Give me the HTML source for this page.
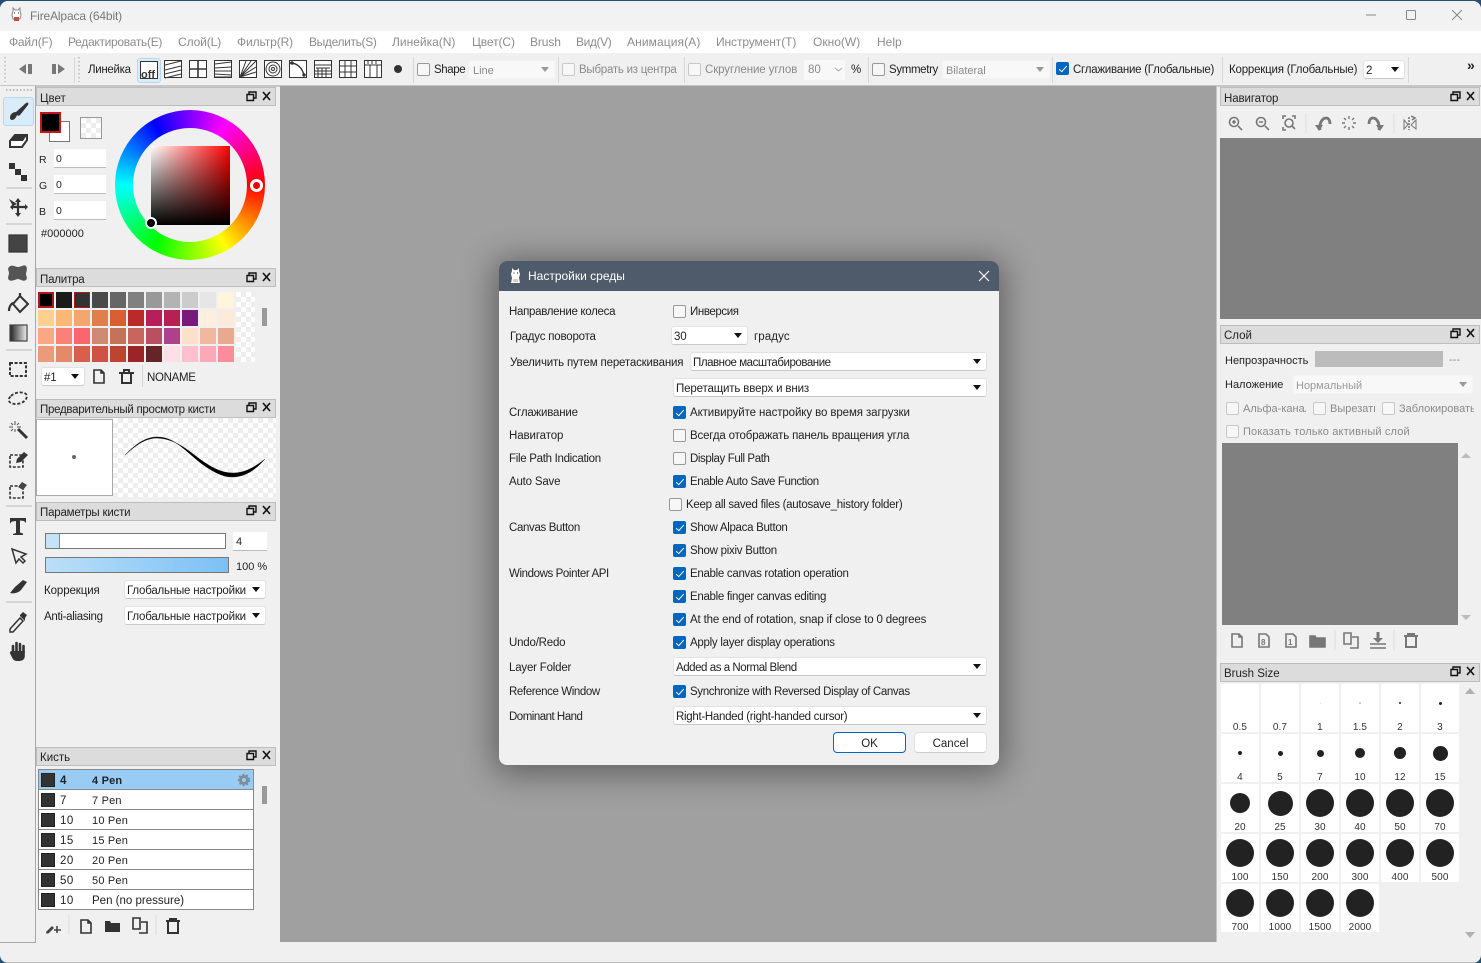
<!DOCTYPE html>
<html><head><meta charset="utf-8"><title>FireAlpaca</title>
<style>
html,body{margin:0;padding:0;width:1481px;height:963px;overflow:hidden;background:#24506e}
#w{position:absolute;left:0;top:1px;width:1481px;height:962px;background:#f0f0f0;border-radius:8px 8px 8px 8px;overflow:hidden;font:12px/16px "Liberation Sans",sans-serif;color:#222}
#w div,#w span{position:absolute}
.t{white-space:nowrap;height:16px;transform:translateY(1px)}
.n{transform:none}
.g{color:#8a8a8a}
.m{color:#8c8c8c;top:33px;font-size:12px;white-space:nowrap}
.h{background:#dcdcdc;border:1px solid #bdbdbd;height:17px;box-sizing:content-box}
.c{width:11px;height:11px;border:1px solid #999;border-radius:2px;background:#f7f7f7}
.c.x{border-color:#c8c8c8}
.c.on{background:#0067c0;border-color:#0067c0}
.c.on::after{content:"";position:absolute;left:3.5px;top:0.5px;width:3px;height:7px;border:solid #fff;border-width:0 1.5px 1.5px 0;transform:rotate(42deg)}
.d{background:#fff;border:1px solid #e2e2e2;border-bottom-color:#c8c8c8;border-radius:3px;box-sizing:border-box;height:19px;line-height:20px;padding-left:2px;white-space:nowrap;font-size:11.5px;letter-spacing:-.2px}
.d::after{content:"";position:absolute;right:5px;top:6px;border:4px solid transparent;border-top:5px solid #111;border-bottom:0}
.d.q{background:#f8f8f8;border-color:#f4f4f4;color:#8a8a8a;font-size:11px;letter-spacing:0}
.d.q::after{border-top-color:#999}
.s{width:1px;background:#d8d8d8;top:56px;height:26px}
.k{background-color:#fff;background-image:conic-gradient(#eee 25%,#fff 0 50%,#eee 0 75%,#fff 0);background-size:10px 10px}
.p{width:16px;height:16px}
.r{left:39px;width:214px;height:19px;background:#fff;border-bottom:1px solid #888;font-size:11.5px;line-height:22px}
.r i{position:absolute;left:2px;top:3px;width:14px;height:14px;background:#333;border:1px solid #222;box-sizing:border-box}
.r b,.r u{position:absolute;font-weight:normal;text-decoration:none;white-space:nowrap}
.r b{left:21px;letter-spacing:.5px}.r u{left:53px;letter-spacing:.2px;font-size:11px}
.b{width:38px;height:48px;background:#fff}
.b i{position:absolute;background:#222;border-radius:50%}
.b span{left:0;width:38px;text-align:center;top:37px;font-size:10px;line-height:14px;color:#333;letter-spacing:.1px}
#dlg{left:499px;top:260px;width:500px;height:504px;background:#f0f0f0;border-radius:8px;box-shadow:0 4px 32px 6px rgba(0,0,0,.38);overflow:hidden}
#dlg .t{font-size:11.5px;letter-spacing:-.2px}
#dlg .t.l3{letter-spacing:-.3px}
#dlg .t.l4{letter-spacing:-.4px}
#dlg .t.l1{letter-spacing:-.1px}
</style></head><body>
<div id="w">
<!-- title bar -->
<div style="left:0;top:0;width:1481px;height:30px;background:#f2f2f2"></div>
<div class="t" style="left:30px;top:6px;color:#777;font-size:12px;letter-spacing:-.15px">FireAlpaca (64bit)</div>
<!-- menu -->
<div style="left:0;top:30px;width:1481px;height:22px;background:#fff"></div>
<span class="m" style="left:9px;letter-spacing:-.2px">Файл(F)</span><span class="m" style="left:68px;letter-spacing:-.3px">Редактировать(E)</span><span class="m" style="left:178px;letter-spacing:-.1px">Слой(L)</span><span class="m" style="left:237px;letter-spacing:-.1px">Фильтр(R)</span><span class="m" style="left:309px;letter-spacing:-.35px">Выделить(S)</span><span class="m" style="left:392px">Линейка(N)</span><span class="m" style="left:472px;letter-spacing:-.1px">Цвет(C)</span><span class="m" style="left:530px;letter-spacing:-.1px">Brush</span><span class="m" style="left:576px;letter-spacing:-.4px">Вид(V)</span><span class="m" style="left:627px;letter-spacing:.1px">Анимация(A)</span><span class="m" style="left:716px;letter-spacing:-.1px">Инструмент(T)</span><span class="m" style="left:813px">Окно(W)</span><span class="m" style="left:877px">Help</span>
<!-- toolbar -->
<div style="left:0;top:52px;width:1481px;height:32px;background:#f0f0f0;border-bottom:2px solid #c6c6c6"></div>
<div style="left:137px;top:57px;width:22px;height:23px;background:#d9ecfb;border:1px solid #b5d8f3;border-radius:3px"></div>
<div class="t" style="left:88px;top:60px;font-size:11.5px;letter-spacing:-.3px">Линейка</div>
<div class="s" style="left:74px"></div><div class="s" style="left:413px"></div><div class="s" style="left:558px"></div><div class="s" style="left:684px"></div><div class="s" style="left:868px"></div><div class="s" style="left:1052px"></div><div class="s" style="left:1222px"></div><div class="s" style="left:1408px"></div>
<div class="c" style="left:417px;top:62px"></div><div class="t" style="left:434px;top:60px;font-size:11.5px;letter-spacing:-.4px">Shape</div>
<div class="d q" style="left:468px;top:59px;width:87px;padding-left:4px">Line</div>
<div class="c x" style="left:562px;top:62px"></div><div class="t g" style="left:579px;top:60px;font-size:11.5px;letter-spacing:-.24px">Выбрать из центра</div>
<div class="c x" style="left:688px;top:62px"></div><div class="t g" style="left:705px;top:60px;font-size:11.5px;letter-spacing:-.1px">Скругление углов</div>
<div class="t g n" style="left:804px;top:59px;width:41px;height:20px;background:#f8f8f8;line-height:20px;padding-left:4px;box-sizing:border-box;font-size:11.5px">80</div>
<div class="t" style="left:851px;top:60px;font-size:11.5px">%</div>
<div class="c" style="left:872px;top:62px"></div><div class="t" style="left:889px;top:60px;font-size:11.5px;letter-spacing:-.35px">Symmetry</div>
<div class="d q" style="left:942px;top:59px;width:108px;padding-left:3px">Bilateral</div>
<div class="c on" style="left:1056px;top:61px"></div><div class="t" style="left:1073px;top:60px;font-size:11.5px;letter-spacing:-.25px">Сглаживание (Глобальные)</div>
<div class="t" style="left:1229px;top:60px;font-size:11.5px;letter-spacing:-.2px">Коррекция (Глобальные)</div>
<div class="d" style="left:1363px;top:59px;width:42px">2</div>
<div class="t n" style="left:1467px;top:56px;font-weight:bold;font-size:14px">»</div>

<!-- left toolbar -->
<div style="left:0;top:85px;width:35px;height:856px;border-right:1px solid #a8a8a8;border-bottom:1px solid #a8a8a8;background:#f0f0f0"></div>
<div style="left:3px;top:96px;width:29px;height:27px;background:#d9ecfb;border:1px solid #b5d8f3;border-radius:3px"></div>

<!-- canvas -->
<div style="left:280px;top:85px;width:936px;height:856px;background:#a0a0a0"></div>
<!-- left panels -->
<div class="h" style="left:36px;top:86px;width:238px"></div>
<div class="t" style="left:40px;top:89px;font-size:11.5px">Цвет</div>
<div class="h" style="left:36px;top:267px;width:238px"></div>
<div class="t" style="left:40px;top:270px;font-size:11.5px;letter-spacing:-.2px">Палитра</div>
<div class="h" style="left:36px;top:398px;width:238px"></div>
<div class="t" style="left:40px;top:400px;font-size:11.5px;letter-spacing:-.27px">Предварительный просмотр кисти</div>
<div class="h" style="left:36px;top:501px;width:238px"></div>
<div class="t" style="left:40px;top:503px;font-size:11.5px;letter-spacing:-.2px">Параметры кисти</div>
<div class="h" style="left:36px;top:746px;width:238px"></div>
<div class="t" style="left:40px;top:748px;font-size:11.5px">Кисть</div>

<!-- color panel -->
<div style="left:49px;top:120px;width:19px;height:19px;background:#fff;border:1px solid #777"></div>
<div style="left:40px;top:111px;width:17px;height:17px;background:#000;border:2px solid #c81414"></div>
<div class="k" style="left:80px;top:116px;width:20px;height:20px;border:1px solid #999"></div>
<div class="t" style="left:39px;top:150px;font-size:10.5px">R</div>
<div class="t" style="left:39px;top:176px;font-size:10.5px">G</div>
<div class="t" style="left:39px;top:202px;font-size:10.5px">B</div>
<div class="t n" style="left:54px;top:148px;width:50px;height:18px;background:#fff;border-bottom:1px solid #bbb;padding-left:2px;line-height:21px;font-size:10.5px">0</div>
<div class="t n" style="left:54px;top:174px;width:50px;height:18px;background:#fff;border-bottom:1px solid #bbb;padding-left:2px;line-height:21px;font-size:10.5px">0</div>
<div class="t n" style="left:54px;top:200px;width:50px;height:18px;background:#fff;border-bottom:1px solid #bbb;padding-left:2px;line-height:21px;font-size:10.5px">0</div>
<div class="t" style="left:41px;top:224px;font-size:11px">#000000</div>
<div style="left:115px;top:109px;width:150px;height:150px;border-radius:50%;background:conic-gradient(#8000ff,#f0f 30deg,#f00 90deg,#ff0 150deg,#0f0 210deg,#0ff 270deg,#00f 330deg,#8000ff 360deg)"></div>
<div style="left:133px;top:127px;width:114px;height:114px;border-radius:50%;background:#f0f0f0"></div>
<div style="left:151px;top:145px;width:79px;height:79px;background:linear-gradient(to top,#000,rgba(0,0,0,0)),linear-gradient(to right,#fff,#f00)"></div>
<div style="left:250px;top:178px;width:7px;height:7px;background:#e80000;border:3px solid #fff;border-radius:50%"></div>
<div style="left:145px;top:216px;width:8px;height:8px;background:#000;border:2.5px solid #fff;border-radius:50%"></div>

<!-- palette -->
<div class="p" style="left:38px;top:291px;background:#000;outline:2px solid #b01818;outline-offset:-2px"></div><div class="p" style="left:56px;top:291px;background:#1a1a1a"></div><div class="p" style="left:74px;top:291px;background:#333;outline:1px solid #b01818;outline-offset:-1px"></div><div class="p" style="left:92px;top:291px;background:#4a4a4a"></div><div class="p" style="left:110px;top:291px;background:#666"></div><div class="p" style="left:128px;top:291px;background:#808080"></div><div class="p" style="left:146px;top:291px;background:#999"></div><div class="p" style="left:164px;top:291px;background:#b3b3b3"></div><div class="p" style="left:182px;top:291px;background:#ccc"></div><div class="p" style="left:200px;top:291px;background:#e6e6e6"></div><div class="p" style="left:218px;top:291px;background:#fff5dc"></div>
<div class="p" style="left:38px;top:309px;background:#fdd08f"></div><div class="p" style="left:56px;top:309px;background:#fbb874"></div><div class="p" style="left:74px;top:309px;background:#f3a66d"></div><div class="p" style="left:92px;top:309px;background:#e07f4c"></div><div class="p" style="left:110px;top:309px;background:#d95f30"></div><div class="p" style="left:128px;top:309px;background:#b92a28"></div><div class="p" style="left:146px;top:309px;background:#b81f5a"></div><div class="p" style="left:164px;top:309px;background:#b81f55"></div><div class="p" style="left:182px;top:309px;background:#7a1a7a"></div><div class="p" style="left:200px;top:309px;background:#fdeedd"></div><div class="p" style="left:218px;top:309px;background:#fdeadb"></div>
<div class="p" style="left:38px;top:327px;background:#fba684"></div><div class="p" style="left:56px;top:327px;background:#fb8078"></div><div class="p" style="left:74px;top:327px;background:#fb6570"></div><div class="p" style="left:92px;top:327px;background:#cf8a74"></div><div class="p" style="left:110px;top:327px;background:#c4735a"></div><div class="p" style="left:128px;top:327px;background:#c8655f"></div><div class="p" style="left:146px;top:327px;background:#b8505f"></div><div class="p" style="left:164px;top:327px;background:#b0408a"></div><div class="p" style="left:182px;top:327px;background:#fde0cc"></div><div class="p" style="left:200px;top:327px;background:#f0b8a0"></div><div class="p" style="left:218px;top:327px;background:#eaa88e"></div>
<div class="p" style="left:38px;top:345px;background:#ec9b7a"></div><div class="p" style="left:56px;top:345px;background:#e58a68"></div><div class="p" style="left:74px;top:345px;background:#d6604a"></div><div class="p" style="left:92px;top:345px;background:#cf5245"></div><div class="p" style="left:110px;top:345px;background:#bd452f"></div><div class="p" style="left:128px;top:345px;background:#9b2428"></div><div class="p" style="left:146px;top:345px;background:#662328"></div><div class="p" style="left:164px;top:345px;background:#fddfe8"></div><div class="p" style="left:182px;top:345px;background:#fdc0cc"></div><div class="p" style="left:200px;top:345px;background:#fba8b8"></div><div class="p" style="left:218px;top:345px;background:#fb8c9c"></div>
<div class="k" style="left:236px;top:291px;width:19px;height:70px"></div>
<div style="left:262px;top:307px;width:5px;height:18px;background:#999"></div>
<div class="d" style="left:41px;top:366px;width:44px">#1</div>
<div style="left:142px;top:364px;width:1px;height:22px;background:#d4d4d4"></div>
<div class="t" style="left:147px;top:368px;font-size:11.5px;letter-spacing:-.3px">NONAME</div>

<!-- brush preview -->
<div class="k" style="left:113px;top:417px;width:163px;height:79px"></div>
<div style="left:36px;top:418px;width:75px;height:75px;background:#fff;border:1px solid #aaa"></div>
<div style="left:72px;top:454px;width:4px;height:4px;background:#666;border-radius:50%"></div>

<!-- brush params -->
<div style="left:45px;top:532px;width:179px;height:14px;background:#fff;border:1px solid #777"></div>
<div style="left:46px;top:533px;width:13px;height:14px;background:#c5e3f8;border-right:1px solid #5d8fb8"></div>
<div class="t n" style="left:233px;top:531px;width:31px;height:18px;background:#fff;border-bottom:1px solid #bbb;padding-left:3px;line-height:21px;font-size:11px">4</div>
<div style="left:45px;top:556px;width:182px;height:14px;background:linear-gradient(to right,#bbdff7,#7cc0f5);border:1px solid #777"></div>
<div class="t" style="left:236px;top:557px;font-size:11px">100 %</div>
<div class="t" style="left:44px;top:581px;font-size:11.5px;letter-spacing:-.1px">Коррекция</div>
<div class="d" style="left:124px;top:579px;width:142px">Глобальные настройки</div>
<div class="t" style="left:44px;top:607px;font-size:11.5px;letter-spacing:-.3px">Anti-aliasing</div>
<div class="d" style="left:124px;top:605px;width:142px">Глобальные настройки</div>

<!-- brush list -->
<div style="left:38px;top:768px;width:216px;height:141px;border:1px solid #888;box-sizing:border-box;background:#888"></div>
<div class="r" style="top:769px;background:#99ccf5;font-weight:bold"><i></i><b style="font-weight:bold">4</b><u style="font-weight:bold">4 Pen</u></div>
<div class="r" style="top:789px"><i></i><b>7</b><u>7 Pen</u></div>
<div class="r" style="top:809px"><i></i><b>10</b><u>10 Pen</u></div>
<div class="r" style="top:829px"><i></i><b>15</b><u>15 Pen</u></div>
<div class="r" style="top:849px"><i></i><b>20</b><u>20 Pen</u></div>
<div class="r" style="top:869px"><i></i><b>50</b><u>50 Pen</u></div>
<div class="r" style="top:889px"><i></i><b>10</b><u style="letter-spacing:0;font-size:11.5px">Pen (no pressure)</u></div>
<div style="left:262px;top:785px;width:5px;height:18px;background:#999"></div>

<!-- right panels -->
<div style="left:1216px;top:85px;width:1px;height:856px;background:#c4c4c4"></div>
<div class="h" style="left:1220px;top:86px;width:258px"></div>
<div class="t" style="left:1224px;top:89px;font-size:11.5px;letter-spacing:-.1px">Навигатор</div>
<div style="left:1220px;top:137px;width:261px;height:181px;background:#808080"></div>
<div class="h" style="left:1220px;top:324px;width:258px"></div>
<div class="t" style="left:1224px;top:326px;font-size:11.5px">Слой</div>
<div class="t" style="left:1225px;top:351px;font-size:11px">Непрозрачность</div>
<div style="left:1315px;top:350px;width:128px;height:16px;background:#bcbcbc"></div>
<div class="t g" style="left:1449px;top:350px;font-size:11px">---</div>
<div class="t" style="left:1225px;top:375px;font-size:11px">Наложение</div>
<div class="d q" style="left:1293px;top:374px;width:180px;color:#999">Нормальный</div>
<div class="c x" style="left:1226px;top:401px"></div><div class="t g" style="left:1243px;top:399px;font-size:11px;width:63px;overflow:hidden">Альфа-канал</div>
<div class="c x" style="left:1313px;top:401px"></div><div class="t g" style="left:1330px;top:399px;font-size:11px;width:45px;overflow:hidden">Вырезать</div>
<div class="c x" style="left:1382px;top:401px"></div><div class="t g" style="left:1399px;top:399px;font-size:11px;width:75px;overflow:hidden">Заблокировать</div>
<div class="c x" style="left:1226px;top:424px"></div><div class="t g" style="left:1243px;top:422px;font-size:11px;letter-spacing:.15px">Показать только активный слой</div>
<div style="left:1222px;top:442px;width:236px;height:182px;background:#808080"></div>
<div class="h" style="left:1220px;top:662px;width:258px"></div>
<div class="t" style="left:1224px;top:664px;font-size:11.5px">Brush Size</div>

<!-- brush size -->
<div class="b" style="left:1221px;top:683px"><span>0.5</span></div>
<div class="b" style="left:1261px;top:683px"><span>0.7</span></div>
<div class="b" style="left:1301px;top:683px"><i style="left:18.5px;top:18.5px;width:1px;height:1px;opacity:.2"></i><span>1</span></div>
<div class="b" style="left:1341px;top:683px"><i style="left:18px;top:18px;width:2px;height:2px;opacity:.3"></i><span>1.5</span></div>
<div class="b" style="left:1381px;top:683px"><i style="left:18px;top:18px;width:2px;height:2px"></i><span>2</span></div>
<div class="b" style="left:1421px;top:683px"><i style="left:17.5px;top:17.5px;width:3px;height:3px"></i><span>3</span></div>
<div class="b" style="left:1221px;top:733px"><i style="left:17px;top:17px;width:4px;height:4px"></i><span>4</span></div>
<div class="b" style="left:1261px;top:733px"><i style="left:16.5px;top:16.5px;width:5px;height:5px"></i><span>5</span></div>
<div class="b" style="left:1301px;top:733px"><i style="left:15.5px;top:15.5px;width:7px;height:7px"></i><span>7</span></div>
<div class="b" style="left:1341px;top:733px"><i style="left:14px;top:14px;width:10px;height:10px"></i><span>10</span></div>
<div class="b" style="left:1381px;top:733px"><i style="left:13px;top:13px;width:12px;height:12px"></i><span>12</span></div>
<div class="b" style="left:1421px;top:733px"><i style="left:11.5px;top:11.5px;width:15px;height:15px"></i><span>15</span></div>
<div class="b" style="left:1221px;top:783px"><i style="left:9px;top:9px;width:20px;height:20px"></i><span>20</span></div>
<div class="b" style="left:1261px;top:783px"><i style="left:6.5px;top:6.5px;width:25px;height:25px"></i><span>25</span></div>
<div class="b" style="left:1301px;top:783px"><i style="left:5px;top:5px;width:28px;height:28px"></i><span>30</span></div>
<div class="b" style="left:1341px;top:783px"><i style="left:5px;top:5px;width:28px;height:28px"></i><span>40</span></div>
<div class="b" style="left:1381px;top:783px"><i style="left:5px;top:5px;width:28px;height:28px"></i><span>50</span></div>
<div class="b" style="left:1421px;top:783px"><i style="left:5px;top:5px;width:28px;height:28px"></i><span>70</span></div>
<div class="b" style="left:1221px;top:833px"><i style="left:5px;top:5px;width:28px;height:28px"></i><span>100</span></div>
<div class="b" style="left:1261px;top:833px"><i style="left:5px;top:5px;width:28px;height:28px"></i><span>150</span></div>
<div class="b" style="left:1301px;top:833px"><i style="left:5px;top:5px;width:28px;height:28px"></i><span>200</span></div>
<div class="b" style="left:1341px;top:833px"><i style="left:5px;top:5px;width:28px;height:28px"></i><span>300</span></div>
<div class="b" style="left:1381px;top:833px"><i style="left:5px;top:5px;width:28px;height:28px"></i><span>400</span></div>
<div class="b" style="left:1421px;top:833px"><i style="left:5px;top:5px;width:28px;height:28px"></i><span>500</span></div>
<div class="b" style="left:1221px;top:883px"><i style="left:5px;top:5px;width:28px;height:28px"></i><span>700</span></div>
<div class="b" style="left:1261px;top:883px"><i style="left:5px;top:5px;width:28px;height:28px"></i><span>1000</span></div>
<div class="b" style="left:1301px;top:883px"><i style="left:5px;top:5px;width:28px;height:28px"></i><span>1500</span></div>
<div class="b" style="left:1341px;top:883px"><i style="left:5px;top:5px;width:28px;height:28px"></i><span>2000</span></div>

<!-- icons overlay -->
<svg width="1481" height="963" viewBox="0 0 1481 963" style="position:absolute;left:0;top:-1px" fill="none">
<defs>
<g id="dk"><path d="M3 3.500V1h7v6H7.500M1 3.500h6.500v6H1z" stroke="#111" stroke-width="1.400"/><path d="M17 1l7 8M24 1l-7 8" stroke="#111" stroke-width="1.600"/></g>
<linearGradient id="gd"><stop offset="0" stop-color="#222"/><stop offset="1" stop-color="#eee"/></linearGradient>
</defs>
<!-- window controls -->
<path d="M1366 15h10" stroke="#888"/><rect x="1406.500" y="10.500" width="9" height="9" rx="1" stroke="#888"/><path d="M1452 10l10 10M1462 10l-10 10" stroke="#888"/>
<!-- app icon -->
<path d="M13 11l0-3 2 2h3l2-2 0 3 1 4-1 4h-7l-1-4z" fill="#fff" stroke="#888"/><path d="M14 13h1M18 13h1" stroke="#444" stroke-width="1.200"/><rect x="14" y="17" width="5" height="4" fill="#c05040"/>
<!-- dock controls -->
<use href="#dk" x="246" y="91"/><use href="#dk" x="246" y="272"/><use href="#dk" x="246" y="402"/><use href="#dk" x="246" y="505"/><use href="#dk" x="246" y="750"/>
<use href="#dk" x="1450" y="91"/><use href="#dk" x="1450" y="328"/><use href="#dk" x="1450" y="666"/>
<!-- grips -->
<path d="M5 57v25M79 57v25" stroke="#bbb" stroke-dasharray="1.500 2.500" stroke-width="1.500"/>
<path d="M6 90h28" stroke="#bbb" stroke-width="2" stroke-dasharray="1.500 2"/>
<path d="M26 64l-7 5 7 5zM28 64h4v10h-4zM52 64h4v10h-4zM58 64l7 5-7 5z" fill="#777"/>
<!-- ruler icons -->
<g stroke="#333" stroke-width="1">
<rect x="140.500" y="61.500" width="17" height="17" fill="#fff"/>
<rect x="164.500" y="60.500" width="17" height="17" fill="#fff"/><path d="M165 65l16-4M165 70l16-4M165 74l16-4M165 78l16-4"/>
<rect x="189.500" y="60.500" width="17" height="17" fill="#fff"/><path d="M198 60v18M189 69h18" stroke-width="1.600"/>
<rect x="214.500" y="60.500" width="17" height="17" fill="#fff"/><path d="M215 64l16-2M215 68l16-1M215 71h16M215 74l16 1M215 77l16 0"/>
<rect x="239.500" y="60.500" width="17" height="17" fill="#fff"/><path d="M240 77l6-16M240 77l11-16M240 77l16-16M240 77l16-10M240 77l16-5"/>
<rect x="264.500" y="60.500" width="17" height="17" fill="#fff"/><circle cx="273" cy="69" r="7"/><circle cx="273" cy="69" r="4"/><circle cx="273" cy="69" r="1.500"/>
<rect x="289.500" y="60.500" width="17" height="17" fill="#fff"/><path d="M290 63c8 0 13 6 14 13" stroke-width="1.400"/><circle cx="292" cy="63" r="1.200" fill="#333"/><circle cx="304" cy="75" r="1.200" fill="#333"/>
<rect x="314.500" y="60.500" width="17" height="17" fill="#fff"/><path d="M314 65h18M316 68h14M314 71h18M314 74h18M318 68v10M322 68v10M326 68v10"/>
<rect x="339.500" y="60.500" width="17" height="17" fill="#fff"/><path d="M345 61v17M351 61v17M340 66h17M340 72h17"/>
<rect x="364.500" y="60.500" width="17" height="17" fill="#fff"/><path d="M365 65h17M370 65v13M377 65v13"/><path d="M368 61v3M372 61v3M376 61v3"/>
</g>
<text x="141" y="78" font-family="Liberation Sans" font-weight="bold" font-size="11" fill="#333">off</text>
<circle cx="398" cy="69" r="4" fill="#333"/>
<path d="M835 68l3.500 3 3.500-3" stroke="#aaa"/>
<!-- left tools -->
<path d="M10 118c0-4 3-6 6-6l10-9c2-1 3 0 2 2l-8 10c-1 1-2 1-3 0-1 3-3 5-5 5-1 0-2-1-2-2z" fill="#333"/>
<path d="M10 141l5-6h12v5l-5 7H10z" fill="#fff" stroke="#333" stroke-width="2"/><path d="M15 135h12l-4 6H10z" fill="#333"/>
<path d="M9 163h6v6H9zM15 169h6v6h-6zM21 175h6v6h-6z" fill="#333"/>
<path d="M9 199l8 5-4 2z" fill="#333"/><path d="M18 200v15M11 207h15" stroke="#333" stroke-width="2.200"/><path d="M18 198l-3 4h6zM18 217l-3-4h6zM10 207l3-3v6zM28 207l-3-3v6z" fill="#333"/>
<rect x="9" y="235" width="18" height="17" fill="#444" stroke="#333" stroke-width="1.200"/>
<path d="M9 267c3-3 6 0 9 0s6-3 8-1c2 3 0 6 0 8s2 4 0 6c-3 2-6-1-8-1s-6 3-9 1c-2-2 0-5 0-7s-2-4 0-6z" fill="#555"/>
<path d="M20 296l8 8-8 8-7-8z" stroke="#333" stroke-width="2" fill="#f0f0f0"/><path d="M14 303c-3 0-5 4-5 8M20 296v-3" stroke="#333" stroke-width="2.200"/>
<rect x="10" y="325" width="17" height="16" fill="url(#gd)" stroke="#444" stroke-width="1.200"/>
<g stroke="#bbb"><path d="M6 188h26M6 224h26M6 350h26M6 506h26M6 602h26"/></g>
<rect x="10" y="363" width="16" height="13" stroke="#333" stroke-width="2" stroke-dasharray="3 1.600"/>
<path d="M11 396c5-5 13-4 15-2 2 3 0 7-5 9-5 2-11 1-12-2-1-2 1-4 2-5z" stroke="#333" stroke-width="1.800" stroke-dasharray="3 1.800"/>
<path d="M18 429l9 9" stroke="#333" stroke-width="3"/><path d="M15 421v4M15 432v-3M9 427h4M21 427h-4M11 423l2 2M19 423l-2 2M11 431l2-2" stroke="#555"/>
<rect x="10" y="455" width="13" height="12" stroke="#333" stroke-width="1.600" stroke-dasharray="3 1.600"/><path d="M17 459l7-7 4 3-7 7-5 1z" fill="#333"/>
<rect x="10" y="486" width="13" height="12" stroke="#333" stroke-width="1.600" stroke-dasharray="3 1.600"/><path d="M18 487l4-5 5 3-4 5z" fill="#444"/>
<path d="M10 518h16v5l-2-2-4-.5v12l3 1v1.500H13V534l3-1v-12l-4 .5-2 2z" fill="#333"/>
<path d="M12 549l14 5-5 3 4 4-2 2-4-4-3 4z" fill="#f0f0f0" stroke="#333" stroke-width="1.500"/>
<path d="M10 593l5-6 8-7 4 2-6 8c-3 3-7 4-11 3z" fill="#333"/>
<path d="M10 629l10-11 3 3-10 11-3 0z" stroke="#333" stroke-width="1.500" fill="#f0f0f0"/><path d="M20 615l3-3 4 3-2 3 0 3-5-5z" fill="#333"/>
<path d="M13 652v-6M16.500 651v-8M20 651v-7M23.500 652v-6" stroke="#333" stroke-width="2.600" stroke-linecap="round"/><path d="M11.800 651h13v5c0 3-2 5-6 5h-2c-3 0-4-2-5-4l-2-4c0-1 1-2 2-2z" fill="#333"/>
<!-- palette buttons -->
<path d="M94 370h7l3 3v10H94zM101 370v3h3" stroke="#333" stroke-width="1.600"/>
<path d="M119 373h15M122 373v10h9v-10M124 373v-3h5v3" stroke="#333" stroke-width="2"/>
<!-- brush stroke -->
<path d="M125 455c10-10 20-18 32-18 18 0 28 14 45 27 10 7 20 13 30 13 14 0 24-8 33-18-10 8-20 14-32 14-12 0-22-6-32-13-16-12-26-21-44-22-12 0-22 8-32 17z" fill="#000" stroke="#000" stroke-width=".4"/>
<!-- brush list footer -->
<path d="M46 932l6-6 2 2-5 5c-1 1-3 1-3-1z" fill="#444"/><path d="M57 926v7M54 930h7" stroke="#444" stroke-width="1.600"/>
<path d="M81 920h7l3 3v10H81zM88 920v3h3" stroke="#333" stroke-width="1.600"/>
<path d="M105 921h5l1 2h9v9h-15z" fill="#333"/>
<path d="M133 918h7v11h-7zM141 922h6v11h-8" stroke="#333" stroke-width="1.600"/>
<path d="M166 921h14M168 921v12h10v-12M170 921v-2h6v2" stroke="#333" stroke-width="2"/>
<path d="M69 915v20M156 915v20" stroke="#ddd"/>
<!-- gear -->
<circle cx="244" cy="780" r="3.500" stroke="#7d8d9a" stroke-width="3"/><circle cx="244" cy="780" r="5.500" stroke="#7d8d9a" stroke-width="1.500" stroke-dasharray="2 2"/>
<!-- navigator tools -->
<g stroke="#777" stroke-width="1.600">
<circle cx="1234" cy="122" r="4.500"/><path d="M1238 126l4 4M1232 122h4M1234 120v4"/>
<circle cx="1261" cy="122" r="4.500"/><path d="M1265 126l4 4M1259 122h4"/>
<circle cx="1289" cy="123" r="4"/><path d="M1292 126l3 3M1283 119v-3h3M1292 116h3v3M1283 127v3h3"/>
<path d="M1320 130c-1-8 3-12 6-12 3 0 4 3 4 6" stroke-width="2.800"/><path d="M1315 125l4 6 4-6z" fill="#777" stroke="none"/>
<path d="M1349 116v3M1349 127v3M1342 123h3M1353 123h3M1344 118l2 2M1352 126l2 2M1344 128l2-2M1352 120l2-2" stroke-width="1.400"/>
<path d="M1379 130c1-8-3-12-6-12-3 0-4 3-4 6" stroke-width="2.800"/><path d="M1384 125l-4 6-4-6z" fill="#777" stroke="none"/>
<path d="M1409 117v13" stroke-dasharray="2 1"/><path d="M1404 120v9l4-4.500zM1411 125l5-5v9z" stroke-width="1"/><path d="M1411 116l4 2-3 2" stroke-width="1.500"/>
</g>
<path d="M1306 113v20M1394 113v20" stroke="#ddd"/>
<!-- layer tools -->
<g stroke="#777" stroke-width="1.600">
<path d="M1232 634h7l3 3v10h-10zM1239 634v3h3"/>
<path d="M1259 634h7l3 3v10h-10z"/><text x="1261" y="645" font-size="8" fill="#777" stroke="none" font-family="Liberation Sans" font-weight="bold">8</text>
<path d="M1286 634h7l3 3v10h-10z"/><text x="1288" y="645" font-size="8" fill="#777" stroke="none" font-family="Liberation Sans" font-weight="bold">1</text>
<path d="M1310 636h5l1 2h9v9h-15z" fill="#777"/>
<path d="M1344 633h7v11h-7zM1352 637h6v11h-8"/>
<path d="M1378 632v8" stroke-width="3"/><path d="M1373 638h10l-5 5z" fill="#777" stroke="none"/><path d="M1370 644h16M1370 648h16"/>
<path d="M1404 636h14M1406 636v11h10v-11M1408 636v-2h6v2" stroke-width="2"/>
</g>
<path d="M1335 630v20M1394 630v20" stroke="#ddd"/>
<!-- scroll arrows -->
<path d="M1466 453l-5 5h10zM1466 620l-5-5h10z" fill="#bbb"/>
<path d="M1470 688l-5 6h10zM1470 938l-5-6h10z" fill="#b0b0b0"/>
<path d="M1477 956v.1M1473 960v.1M1477 960v.1" stroke="#aaa" stroke-width="2"/>
</svg>
<div style="left:0;top:961px;width:1481px;height:1px;background:#bbb"></div>

<!-- dialog -->
<div id="dlg">
<div style="left:0;top:0;width:500px;height:30px;background:#4f5b6b"></div>
<svg width="500" height="30" style="position:absolute;left:0;top:0" fill="none"><path d="M13 10l0-3 2 2h3l2-2 0 3 1 3-1 4 1 5h-9l1-5-1-4z" fill="#fff"/><path d="M14.500 12h1M18 12h1" stroke="#445" stroke-width="1.200"/><rect x="14" y="18" width="5" height="3" fill="#d8d0b0"/><path d="M480 10l10 10M490 10l-10 10" stroke="#fff" stroke-width="1.100"/></svg>
<div class="t n" style="left:29px;top:7px;color:#fff;font-size:12px;letter-spacing:0">Настройки среды</div>

<div class="t l3" style="left:10px;top:42px">Направление колеса</div><div class="c" style="left:174px;top:44px"></div><div class="t l4" style="left:191px;top:42px">Инверсия</div>
<div class="t" style="left:11px;top:67px">Градус поворота</div><div class="d" style="left:172px;top:65px;width:77px">30</div><div class="t" style="left:255px;top:67px;letter-spacing:.1px">градус</div>
<div class="t" style="left:11px;top:93px;letter-spacing:-.17px">Увеличить путем перетаскивания</div><div class="d" style="left:191px;top:91px;width:297px;letter-spacing:-.45px">Плавное масштабирование</div>
<div class="d" style="left:174px;top:117px;width:314px;letter-spacing:-.15px">Перетащить вверх и вниз</div>
<div class="t" style="left:10px;top:143px">Сглаживание</div><div class="c on" style="left:174px;top:145px"></div><div class="t l1" style="left:191px;top:143px">Активируйте настройку во время загрузки</div>
<div class="t l1" style="left:10px;top:166px">Навигатор</div><div class="c" style="left:174px;top:168px"></div><div class="t" style="left:191px;top:166px;letter-spacing:-.17px">Всегда отображать панель вращения угла</div>
<div class="t l3" style="left:10px;top:189px">File Path Indication</div><div class="c" style="left:174px;top:191px"></div><div class="t l4" style="left:191px;top:189px">Display Full Path</div>
<div class="t" style="left:10px;top:212px">Auto Save</div><div class="c on" style="left:174px;top:214px"></div><div class="t l4" style="left:191px;top:212px">Enable Auto Save Function</div>
<div class="c" style="left:170px;top:237px"></div><div class="t" style="left:187px;top:235px;letter-spacing:-.27px">Keep all saved files (autosave_history folder)</div>
<div class="t" style="left:10px;top:258px;letter-spacing:-.35px">Canvas Button</div><div class="c on" style="left:174px;top:260px"></div><div class="t l3" style="left:191px;top:258px">Show Alpaca Button</div>
<div class="c on" style="left:174px;top:283px"></div><div class="t" style="left:191px;top:281px;letter-spacing:-.27px">Show pixiv Button</div>
<div class="t l4" style="left:10px;top:304px">Windows Pointer API</div><div class="c on" style="left:174px;top:306px"></div><div class="t l3" style="left:191px;top:304px">Enable canvas rotation operation</div>
<div class="c on" style="left:174px;top:329px"></div><div class="t l3" style="left:191px;top:327px">Enable finger canvas editing</div>
<div class="c on" style="left:174px;top:352px"></div><div class="t" style="left:191px;top:350px;letter-spacing:-.16px">At the end of rotation, snap if close to 0 degrees</div>
<div class="t" style="left:10px;top:373px">Undo/Redo</div><div class="c on" style="left:174px;top:375px"></div><div class="t" style="left:191px;top:373px;letter-spacing:-.27px">Apply layer display operations</div>
<div class="t" style="left:10px;top:398px">Layer Folder</div><div class="d" style="left:174px;top:396px;width:314px;letter-spacing:-.45px">Added as a Normal Blend</div>
<div class="t l4" style="left:10px;top:422px">Reference Window</div><div class="c on" style="left:174px;top:424px"></div><div class="t" style="left:191px;top:422px;letter-spacing:-.36px">Synchronize with Reversed Display of Canvas</div>
<div class="t" style="left:10px;top:447px;letter-spacing:-.5px">Dominant Hand</div><div class="d" style="left:174px;top:445px;width:314px;letter-spacing:-.3px">Right-Handed (right-handed cursor)</div>
<div class="t n" style="left:334px;top:471px;width:73px;height:21px;line-height:23px;text-align:center;background:#fff;border:1px solid #0067c0;border-radius:4px;box-sizing:border-box;letter-spacing:0">OK</div>
<div class="t n" style="left:415px;top:471px;width:73px;height:21px;line-height:23px;text-align:center;background:#fff;border:1px solid #e0e0e0;border-bottom-color:#ccc;border-radius:4px;box-sizing:border-box;letter-spacing:0">Cancel</div>
</div>
</div>
</body></html>
